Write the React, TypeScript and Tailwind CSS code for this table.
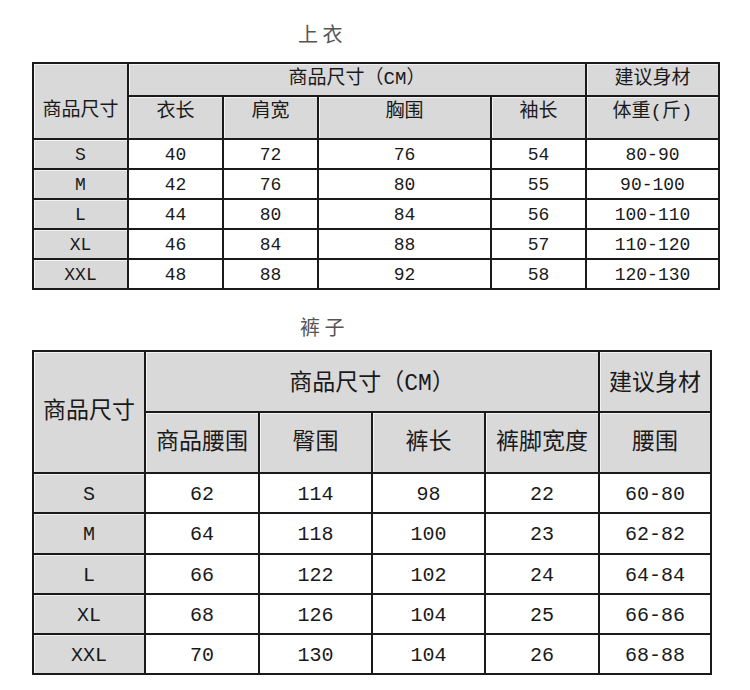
import React from "react";

const FONT = { fontFamily: '"Liberation Mono", "Noto Sans CJK SC", monospace' };

type Cell = { text: string; gray?: boolean; cls?: string };

function C({ text, gray, cls }: Cell) {
  return (
    <div
      className={`flex items-center justify-center text-[#1a1a1a] whitespace-nowrap ${
        gray ? "bg-[#d9d9d9] shadow-[inset_1px_1px_0_#f2f2f2]" : "bg-white"
      } ${cls ?? ""}`}
    >
      {text}
    </div>
  );
}

const topRows = [
  ["S", "40", "72", "76", "54", "80-90"],
  ["M", "42", "76", "80", "55", "90-100"],
  ["L", "44", "80", "84", "56", "100-110"],
  ["XL", "46", "84", "88", "57", "110-120"],
  ["XXL", "48", "88", "92", "58", "120-130"],
];

const pantRows = [
  ["S", "62", "114", "98", "22", "60-80"],
  ["M", "64", "118", "100", "23", "62-82"],
  ["L", "66", "122", "102", "24", "64-84"],
  ["XL", "68", "126", "104", "25", "66-86"],
  ["XXL", "70", "130", "104", "26", "68-88"],
];

export default function App() {
  return (
    <div className="w-[750px] h-[690px] bg-white overflow-hidden" style={FONT}>
      <div className="pt-[24px] pl-[298px] h-[44px] text-[20px] leading-[20px] text-[#555]" style={{ fontFamily: '"Noto Sans CJK SC", sans-serif' }}>
        上 衣
      </div>
      <div className="ml-[32px] mt-[18px] w-[688px] p-[2px] bg-[#1a1a1a] grid gap-[2px] grid-cols-[93px_93px_93px_171px_93px_131px] grid-rows-[31px_41px_28px_28px_28px_28px_28px]">
        <C text="商品尺寸" gray cls="row-span-2 text-[19px] pt-[20px]" />
        <C text="商品尺寸（CM）" gray cls="col-span-4 text-[19px]" />
        <C text="建议身材" gray cls="text-[19px]" />
        <C text="衣长" gray cls="text-[19px] pb-[11px]" />
        <C text="肩宽" gray cls="text-[19px] pb-[11px]" />
        <C text="胸围" gray cls="text-[19px] pb-[11px]" />
        <C text="袖长" gray cls="text-[19px] pb-[11px]" />
        <C text="体重(斤)" gray cls="text-[19px] pb-[11px]" />
        {topRows.map((r) =>
          r.map((t, i) => <C key={r[0] + i} text={t} gray={i === 0} cls="text-[18px] pt-[3px]" />)
        )}
      </div>
      <div className="mt-[27px] pl-[300px] h-[20px] text-[20px] leading-[20px] text-[#555]" style={{ fontFamily: '"Noto Sans CJK SC", sans-serif' }}>
        裤 子
      </div>
      <div className="ml-[32px] mt-[13px] w-[680px] p-[2px] bg-[#1a1a1a] grid gap-[2px] grid-cols-[110px_112px_111px_111px_112px_110px] grid-rows-[59px_59px_38px_39px_38px_38px_38px]">
        <C text="商品尺寸" gray cls="row-span-2 text-[23px]" />
        <C text="商品尺寸（CM）" gray cls="col-span-4 text-[23px] pt-[6px]" />
        <C text="建议身材" gray cls="text-[23px] pt-[6px]" />
        <C text="商品腰围" gray cls="text-[23px] pt-[2px]" />
        <C text="臀围" gray cls="text-[23px] pt-[2px]" />
        <C text="裤长" gray cls="text-[23px] pt-[2px]" />
        <C text="裤脚宽度" gray cls="text-[23px] pt-[2px]" />
        <C text="腰围" gray cls="text-[23px] pt-[2px]" />
        {pantRows.map((r) =>
          r.map((t, i) => <C key={r[0] + i} text={t} gray={i === 0} cls="text-[20px] pt-[3px]" />)
        )}
      </div>
    </div>
  );
}
